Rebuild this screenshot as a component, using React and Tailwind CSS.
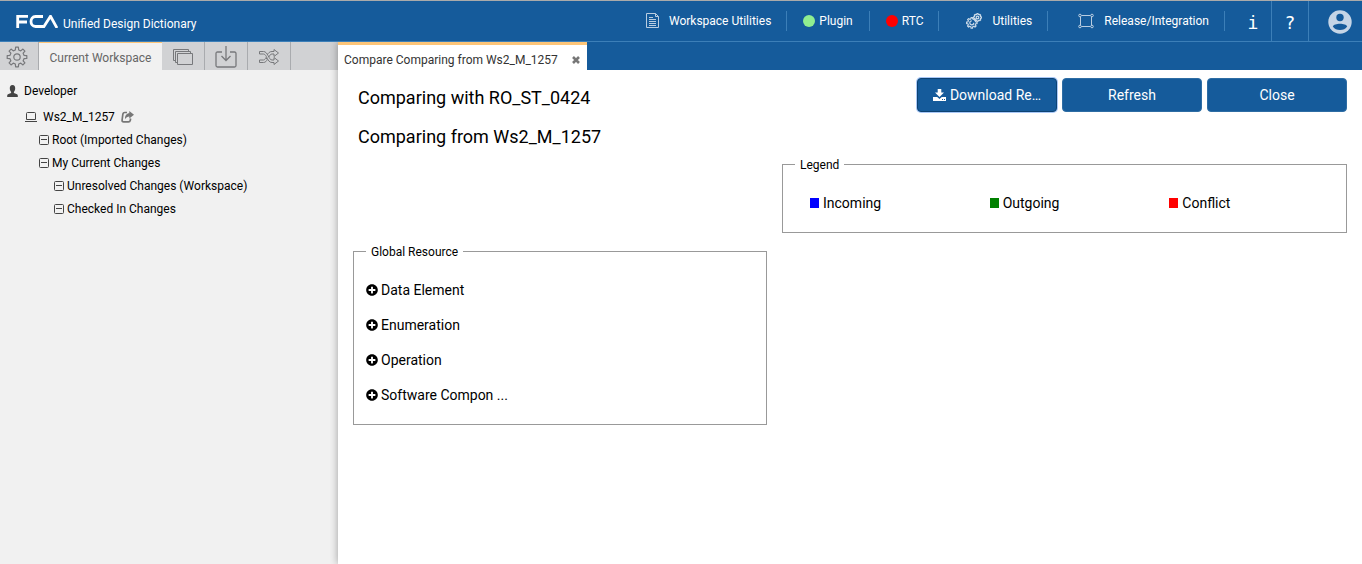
import React from "react";
import { FaPlusCircle } from "react-icons/fa";

const stroke = { fill: "none", stroke: "currentColor" };

function FcaLogo() {
  return (
    <svg className="h-[13px] w-[42px] shrink-0" viewBox="0 0 42 13" fill="none" stroke="white" strokeWidth="2.8" role="img" aria-label="FCA">
      <path d="M1.7 13V1.4H12M1.7 7H11" />
      <path d="M27 1.5H19.5C13.500 1.500 13.500 11.500 19.500 11.500H27" />
      <path d="M27 13L34.500 1.200L41 13" />
    </svg>
  );
}

function DocIcon() {
  return (
    <svg className="h-4 w-[14px]" viewBox="0 0 14 16" {...stroke}>
      <path d="M1.500 .5H10.500L13.500 3.500V14.500H1.500ZM10.500 .5V3.500H13.500" />
      <path d="M4 4.500H8M4 6.500H11M4 8.500H11M4 10.500H11M4 12.500H11" />
    </svg>
  );
}

const gearPath = (cx, cy, teeth, outer, inner) => {
  const points = [];
  const step = (Math.PI * 2) / teeth;
  for (let i = 0; i < teeth; i++) {
    const a = i * step - Math.PI / 2;
    [[-0.3, inner], [-0.18, outer], [0.18, outer], [0.3, inner]].forEach(([k, r]) => {
      points.push(`${(cx + r * Math.cos(a + k * step)).toFixed(2)} ${(cy + r * Math.sin(a + k * step)).toFixed(2)}`);
    });
  }
  return `M${points.join("L")}Z`;
};

function GearIcon() {
  return (
    <svg className="h-[22px] w-[22px]" viewBox="0 0 22 22" {...stroke} strokeWidth="1.200" strokeLinejoin="round">
      <path d={gearPath(11, 11, 8, 9.9, 7.2)} />
      <circle cx="11" cy="11" r="3.200" />
    </svg>
  );
}

function GearsIcon() {
  return (
    <svg className="h-4 w-4" viewBox="0 0 16 16" {...stroke} strokeWidth="1.200" strokeLinejoin="round">
      <path d={gearPath(5.8, 9.8, 8, 5.3, 4)} />
      <path d="M7.800 9.800A2 2 0 1 1 5.800 7.800" />
      <path d={gearPath(11.500, 4.500, 8, 4, 3.2)} />
      <circle cx="11.500" cy="4.500" r="1.300" />
    </svg>
  );
}

function NodesIcon() {
  return (
    <svg className="h-4 w-4" viewBox="0 0 16 16" {...stroke}>
      <circle cx="2" cy="2.500" r="1.300" />
      <circle cx="14" cy="2.500" r="1.300" />
      <circle cx="2" cy="13.500" r="1.300" />
      <circle cx="14" cy="13.500" r="1.300" />
      <path d="M3.500 2.500H12.500M3.500 13.500H12.500M2.500 4V12M13.500 4V12" />
    </svg>
  );
}

function AccountIcon() {
  return (
    <svg className="h-6 w-6" viewBox="0 0 24 24">
      <circle cx="12" cy="12" r="11.700" fill="#c5d5e6" />
      <circle cx="12" cy="7.500" r="3.700" fill="#155b9b" />
      <path d="M4.800 16.500C6 12.800 18 12.800 19.200 16.500C16.500 21.300 7.500 21.300 4.800 16.500Z" fill="#155b9b" />
    </svg>
  );
}

function StackIcon() {
  return (
    <svg className="h-4 w-5" viewBox="0 0 20 16" {...stroke}>
      <path d="M4.500 4.500H19.500V15.500H4.500Z" />
      <path d="M2.500 13.500V2.500H17.500V4.500M4.500 13.500H2.500M.5 11.500V.5H15.500V2.500M2.500 11.500H.5" />
    </svg>
  );
}

function InboxIcon() {
  return (
    <svg className="h-[22px] w-[22px]" viewBox="0 0 22 22" {...stroke} strokeWidth="1.300">
      <path d="M7 6H2.500Q1 6 1 7.500V19.500Q1 21 2.500 21H19.500Q21 21 21 19.500V7.500Q21 6 19.500 6H15" />
      <path d="M11 0V14M6.500 10L11 14.500L15.500 10" />
    </svg>
  );
}

function ShuffleIcon() {
  return (
    <svg className="h-4 w-5" viewBox="0 0 20 16" {...stroke} strokeLinejoin="round">
      <path d="M.5 2.500H4.500C9 2.500 9.500 11 13 11H15V8.500L19.500 12L15 15.500V13.500H13C8 13.500 8 5 4.500 5H.5Z" />
      <path d="M.5 13.500H4.500C6.500 13.500 7.500 12 8.300 10.500L6.900 8.700C6.200 10 5.600 11 4.500 11H.5ZM8.200 5.900C9.400 4 10.500 2.500 13 2.500H15V.5L19.500 4L15 7.500V5H13C11.500 5 10.800 6.300 9.800 8" />
    </svg>
  );
}

function UserIcon() {
  return (
    <svg className="h-3 w-[11px] text-[#444]" viewBox="0 0 11 12" fill="currentColor">
      <path d="M5.500 0C7.500 0 8.200 1.400 8.200 3.200C8.200 4.800 7.500 6.200 6.900 6.900V8C8.500 8.700 10.800 9 10.800 10.600V12H.2V10.600C.2 9 2.500 8.700 4.100 8V6.900C3.500 6.200 2.800 4.800 2.800 3.200C2.800 1.400 3.500 0 5.500 0Z" />
    </svg>
  );
}

function LaptopIcon() {
  return (
    <svg className="h-[10px] w-3 text-[#444]" viewBox="0 0 12 10" {...stroke}>
      <path d="M1.500 1.500Q1.500 .5 2.500 .5H9.500Q10.500 .5 10.500 1.500V7.500H1.500ZM0 9.500H12" />
    </svg>
  );
}

function ShareIcon() {
  return (
    <svg className="h-3 w-[13px]" viewBox="0 0 13 12" {...stroke}>
      <path d="M6 1.500H3.700Q2.200 1.500 1.900 3L1.100 9Q.9 10.800 2.600 10.800H7.500Q9 10.800 9.300 9.300L9.600 7.500" strokeWidth="1.700" />
      <path d="M8.300 0L13 3.800L8.300 7.600V5.400C6.500 5.400 5.200 6.200 4 8.300C3.800 4.500 5.500 2.200 8.300 2.200Z" fill="currentColor" stroke="none" />
    </svg>
  );
}

function CollapseIcon() {
  return (
    <svg className="h-[10px] w-[10px] text-[#444]" viewBox="0 0 10 10" {...stroke}>
      <rect x=".5" y=".5" width="9" height="9" rx="1" />
      <path d="M2 4.500H8" />
    </svg>
  );
}

function DownloadIcon() {
  return (
    <svg className="h-3 w-[13px]" viewBox="0 0 13 12" fill="currentColor">
      <path d="M4.700 0H8.300V3.500H11L6.500 8L2 3.500H4.700Z" />
      <path fillRule="evenodd" d="M0 8H4.200L6.500 10L8.800 8H13V12H0ZM9 10V11H10V10ZM11 10V11H12V10Z" />
    </svg>
  );
}

function CloseIcon() {
  return (
    <svg className="h-2 w-2" viewBox="0 0 8 8" {...stroke} strokeWidth="2.600">
      <path d="M1 1L7 7M7 1L1 7" />
    </svg>
  );
}

function NavItem({ children, className }) {
  return (
    <button type="button" className={`flex h-5 items-center whitespace-nowrap border-r border-[#3c7fb8] ${className}`}>
      {children}
    </button>
  );
}

function TreeRow({ icon, label, className, children }) {
  return (
    <li className={`flex h-[23px] items-center ${className}`}>
      {icon}
      <span>{label}</span>
      {children}
    </li>
  );
}

function ActionButton({ children, className }) {
  return (
    <button type="button" className={`flex h-[34px] w-[140px] items-center justify-center gap-1 rounded border bg-[#155b9b] text-sm text-white ${className}`}>
      {children}
    </button>
  );
}

const legend = [
  ["Incoming", "bg-[#0000ff]"],
  ["Outgoing", "bg-[#008000]"],
  ["Conflict", "bg-[#ff0000]"],
];

const resources = ["Data Element", "Enumeration", "Operation", "Software Compon ..."];

export default function App() {
  return (
    <div className="flex min-h-screen flex-col bg-white font-[Roboto,sans-serif] text-xs text-black">
      <header className="flex h-[42px] items-center border-t border-b border-t-[#aaa] border-b-[#3c7fb8] bg-[#155b9b] text-white">
        <div className="flex items-center gap-[5px] pl-4">
          <FcaLogo />
          <h1 className="whitespace-nowrap pt-[6px] text-xs">Unified Design Dictionary</h1>
        </div>
        <nav className="ml-auto flex items-center self-stretch">
          <NavItem className="gap-[10px] pr-[15px]">
            <span className="text-[#b9cde1]"><DocIcon /></span>
            Workspace Utilities
          </NavItem>
          <NavItem className="gap-1 px-4">
            <span className="h-3 w-3 rounded-full bg-[#90ee90]" />
            Plugin
          </NavItem>
          <NavItem className="gap-1 pr-[15px] pl-4">
            <span className="h-3 w-3 rounded-full bg-[#ff0000]" />
            RTC
          </NavItem>
          <NavItem className="gap-[10px] pr-[15px] pl-[27px]">
            <span className="text-[#c9d9e8]"><GearsIcon /></span>
            Utilities
          </NavItem>
          <NavItem className="gap-[10px] pr-[15px] pl-[30px]">
            <span className="text-[#b9cde1]"><NodesIcon /></span>
            Release/Integration
          </NavItem>
          <button type="button" aria-label="Information" className="w-[47px] self-stretch border-r border-[#3c7fb8] pt-1 pl-[10px] font-['DejaVu_Sans_Mono',monospace] text-lg">i</button>
          <button type="button" aria-label="Help" className="w-[37px] self-stretch border-r border-[#3c7fb8] pt-1 font-['DejaVu_Sans_Mono',monospace] text-lg">?</button>
          <button type="button" aria-label="Account" className="flex w-[53px] items-center justify-end self-stretch pt-[2px] pr-[10px]"><AccountIcon /></button>
        </nav>
      </header>

      <div className="flex flex-1">
        <aside className="w-[338px] shrink-0 bg-[#f1f1f1]">
          <div className="flex h-7 bg-[#d1d2d4] text-[#77787b]">
            <button type="button" aria-label="Settings" className="flex w-[39px] items-center justify-center border-r border-[#a9abae] pt-[2px] pr-1"><GearIcon /></button>
            <button type="button" className="w-[123px] whitespace-nowrap border-t border-[#fdc578] bg-[#f1f1f1] pt-[2px] text-xs text-[#666]">Current Workspace</button>
            <button type="button" aria-label="Workspaces" className="flex w-[43px] items-center justify-center border-r border-[#a9abae] pt-[2px]"><StackIcon /></button>
            <button type="button" aria-label="Import" className="flex w-[43px] items-center justify-center border-r border-[#a9abae] pt-[2px]"><InboxIcon /></button>
            <button type="button" aria-label="Compare" className="flex w-[43px] items-center justify-center border-r border-[#a9abae] pt-[2px]"><ShuffleIcon /></button>
          </div>
          <ul className="pt-[9px]">
            <TreeRow className="mb-[3px] gap-[6px] pl-[7px]" icon={<UserIcon />} label="Developer" />
            <TreeRow className="gap-[6px] pl-[25px]" icon={<LaptopIcon />} label="Ws2_M_1257">
              <button type="button" aria-label="Share workspace" className="text-[#777]"><ShareIcon /></button>
            </TreeRow>
            <TreeRow className="gap-[3px] pl-[39px]" icon={<CollapseIcon />} label="Root (Imported Changes)" />
            <TreeRow className="gap-[3px] pl-[39px]" icon={<CollapseIcon />} label="My Current Changes" />
            <TreeRow className="gap-[3px] pl-[54px]" icon={<CollapseIcon />} label="Unresolved Changes (Workspace)" />
            <TreeRow className="gap-[3px] pl-[54px]" icon={<CollapseIcon />} label="Checked In Changes" />
          </ul>
        </aside>

        <main className="min-w-0 flex-1 bg-white shadow-[0_0_8px_rgba(0,0,0,0.35)] [clip-path:inset(0_0_0_-8px)]">
          <div className="flex h-7 bg-[#155b9b]">
            <div className="flex w-[249px] items-center justify-between border-t-3 border-[#fdc578] bg-white pt-[5px] pr-[7px] pl-[6px] text-[#333]">
              <span className="whitespace-nowrap">Compare Comparing from Ws2_M_1257</span>
              <button type="button" aria-label="Close tab" className="text-[#777]"><CloseIcon /></button>
            </div>
          </div>

          <div className="grid grid-cols-[414fr_565fr] gap-x-[15px] px-[15px] pt-2">
            <div className="flex h-[77px] flex-col gap-[15px] pt-2 pl-[5px] text-lg leading-6">
              <h2>Comparing with RO_ST_0424</h2>
              <h2>Comparing from Ws2_M_1257</h2>
            </div>
            <div className="flex justify-end gap-[5px]">
              <ActionButton className="border-[#0d4373] ring-1 ring-[#a9c8f7]"><DownloadIcon />Download Re…</ActionButton>
              <ActionButton className="border-[#2e6da4]">Refresh</ActionButton>
              <ActionButton className="border-[#2e6da4]">Close</ActionButton>
            </div>

            <fieldset className="col-start-2 border border-[#999] px-3 pb-[19px]">
              <legend className="px-[5px] pt-[1px] leading-[18px]">Legend</legend>
              <ul className="grid grid-cols-3 pt-[19px] text-sm">
                {legend.map(([label, color]) => (
                  <li key={label} className="flex items-center gap-1 pl-[15px]">
                    <span className={`h-[10px] w-[9px] ${color}`} />
                    {label}
                  </li>
                ))}
              </ul>
            </fieldset>

            <fieldset className="col-start-1 mt-[9px] border border-[#999] px-3 pb-3">
              <legend className="px-[5px] pt-[1px] leading-[18px]">Global Resource</legend>
              <ul className="pt-[11px] text-sm">
                {resources.map((name) => (
                  <li key={name}>
                    <button type="button" className="flex h-[35px] items-center gap-[3px]">
                      <FaPlusCircle className="h-3 w-3" />
                      {name}
                    </button>
                  </li>
                ))}
              </ul>
            </fieldset>
          </div>
        </main>
      </div>
    </div>
  );
}
